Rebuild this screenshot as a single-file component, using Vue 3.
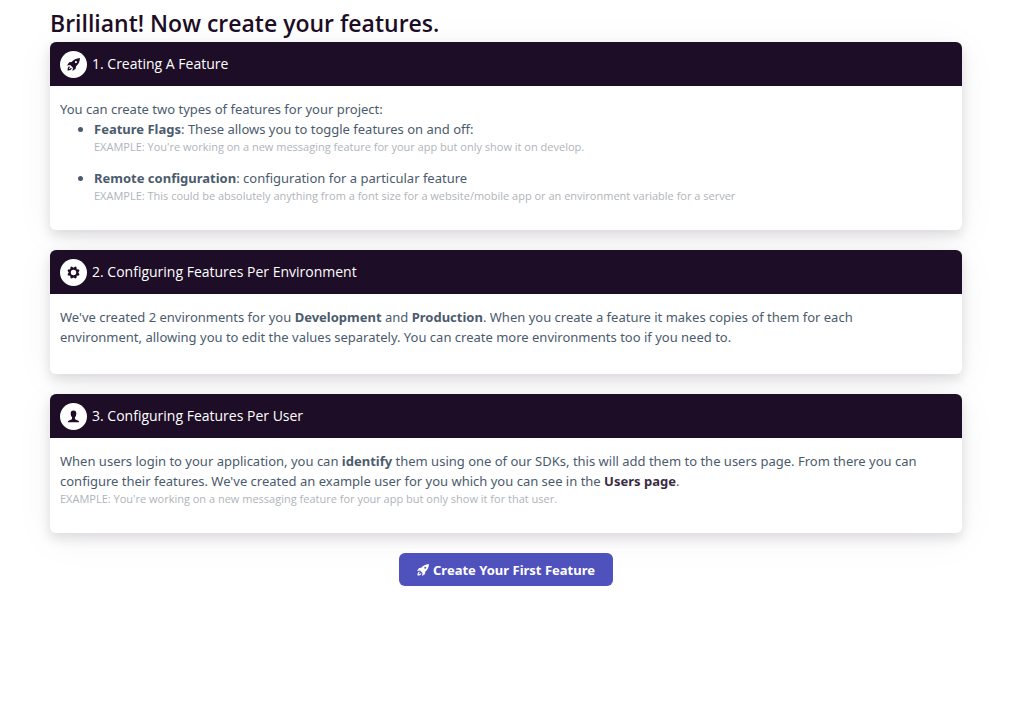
<script setup>
const rocket =
  'M24 0C17 .5 12 3 8.500 7.500L4 8L0 14L6 13L11 18L10 24L16 20L16.500 15.500C21 12 23.500 7 24 0ZM16.500 5.500A2 2 0 1 1 16.500 9.500A2 2 0 0 1 16.500 5.500ZM4.500 15C2 16 .8 19 1 23C5 23.200 8 22 9 19.500L6.800 18.500C6.200 19.800 5 20.400 3.500 20.500C3.600 19 4.200 17.800 5.500 17.200Z'
const gear =
  'M8.800 1L12 3L15.200 1L17.500 2L18 6L22 6.500L23 8.800L20.800 12L23 15.200L22 17.500L18 18L17.500 22L15.200 23L12 21L8.800 23L6.500 22L6 18L2 17.500L1 15.200L3.200 12L1 8.800L2 6.500L6 6L6.500 2ZM12 7a5 5 0 1 0 0 10a5 5 0 1 0 0-10Z'
const person =
  'M12 1C8.500 1 6.600 3 6.800 6.700C6.900 9.500 7.800 11.600 9 13C9.800 14.500 9.600 16.600 8.400 17.400C5.300 18.500 2 19 1.500 22.500H22.500C22 19 18.700 18.500 15.600 17.400C14.400 16.600 14.200 14.500 15 13C16.200 11.600 17.100 9.500 17.200 6.700C17.400 3 15.500 1 12 1Z'
</script>

<template>
  <main class="page">
    <h1>Brilliant! Now create your features.</h1>

    <section class="card">
      <h2>
        <span class="badge"><svg viewBox="0 0 24 24" aria-hidden="true"><path :d="rocket" fill-rule="evenodd" /></svg></span>
        1. Creating A Feature
      </h2>
      <div class="body">
        <p>You can create two types of features for your project:</p>
        <ul>
          <li>
            <strong>Feature Flags</strong>: These allows you to toggle features on and off:
            <p class="example">EXAMPLE: You're working on a new messaging feature for your app but only show it on develop.</p>
          </li>
          <li>
            <strong>Remote configuration</strong>: configuration for a particular feature
            <p class="example">EXAMPLE: This could be absolutely anything from a font size for a website/mobile app or an environment variable for a server</p>
          </li>
        </ul>
      </div>
    </section>

    <section class="card">
      <h2>
        <span class="badge"><svg viewBox="0 0 24 24" aria-hidden="true"><path :d="gear" fill-rule="evenodd" /></svg></span>
        2. Configuring Features Per Environment
      </h2>
      <div class="body">
        <p>
          We've created 2 environments for you <strong>Development</strong> and <strong>Production</strong>. When you
          create a feature it makes copies of them for each environment, allowing you to edit the values separately. You
          can create more environments too if you need to.
        </p>
      </div>
    </section>

    <section class="card">
      <h2>
        <span class="badge"><svg viewBox="0 0 24 24" aria-hidden="true"><path :d="person" /></svg></span>
        3. Configuring Features Per User
      </h2>
      <div class="body">
        <p>
          When users login to your application, you can <strong>identify</strong> them using one of our SDKs, this will
          add them to the users page. From there you can configure their features. We've created an example user for you
          which you can see in the <a href="#users">Users page</a>.
        </p>
        <p class="example">EXAMPLE: You're working on a new messaging feature for your app but only show it for that user.</p>
      </div>
    </section>

    <button type="button" class="create">
      <svg viewBox="0 0 24 24" aria-hidden="true"><path :d="rocket" fill-rule="evenodd" /></svg>
      Create Your First Feature
    </button>
  </main>
</template>

<style>
body {
  margin: 0;
  background: #fff;
}
</style>

<style scoped>
.page {
  display: flex;
  flex-direction: column;
  gap: 20px;
  padding: 8px 62px 40px 50px;
  font-family: "Noto Sans", "Open Sans", sans-serif;
  font-size: 13px;
  line-height: 20px;
  color: #4b5b6d;
}
h1 {
  margin: 0 0 -16px;
  font-family: "Open Sans", sans-serif;
  font-size: 23px;
  line-height: 30px;
  font-weight: 600;
  color: #1e0d26;
}
.card {
  border-radius: 6px;
  background: #fff;
  box-shadow: 0 5px 12px rgba(30, 13, 38, 0.13), 0 6px 40px rgba(30, 13, 38, 0.05);
}
h2 {
  display: flex;
  align-items: center;
  gap: 5px;
  margin: 0;
  padding: 8px 10px;
  border-radius: 6px 6px 0 0;
  background: #1e0d26;
  color: #fff;
  font-family: "Open Sans", sans-serif;
  font-size: 14px;
  line-height: 28px;
  font-weight: 500;
}
.badge {
  display: flex;
  align-items: center;
  justify-content: center;
  width: 27px;
  height: 27px;
  border-radius: 50%;
  background: #fff;
  color: #1e0d26;
}
svg {
  width: 13px;
  height: 13px;
  fill: currentColor;
}
.body {
  padding: 13px 28px 27px 10px;
}
p {
  margin: 0;
}
ul {
  margin: 0;
  padding: 0 0 0 34px;
}
li + li {
  margin-top: 14px;
}
.example {
  font-family: "Open Sans", sans-serif;
  font-size: 11px;
  line-height: 15px;
  color: #b0b4ba;
}
strong {
  font-weight: 700;
}
a {
  color: #3a2b42;
  font-weight: 700;
  text-decoration: none;
}
.create {
  align-self: center;
  display: flex;
  align-items: center;
  gap: 4px;
  height: 33px;
  padding: 0 18px;
  border: 0;
  border-radius: 6px;
  background: #4f51bd;
  color: #fff;
  font: 700 13px/20px "Noto Sans", "Open Sans", sans-serif;
}
.create svg {
  width: 12px;
  height: 12px;
}
</style>
